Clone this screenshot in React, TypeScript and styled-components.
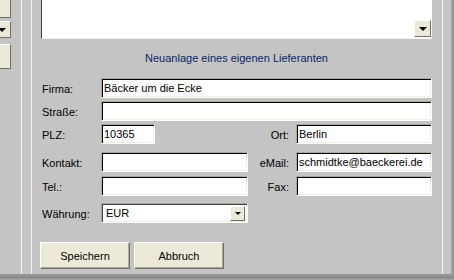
import React from 'react';
import styled, { createGlobalStyle } from 'styled-components';

const GlobalStyle = createGlobalStyle`
  html, body {
    margin: 0;
    padding: 0;
    background: #c4c4c4;
  }
  * {
    box-sizing: border-box;
  }
`;

const ui = {
  face: '#ece9d8',
  gray: '#c4c4c4',
  rule: '#f6f5ea',
  dark: '#716f64',
  mid: '#aca899',
  navy: '#0a246a',
  font: '"Liberation Sans", Arial, sans-serif',
};

const Frame = styled.div`
  width: 454px;
  height: 280px;
  display: flex;
  flex-direction: column;
  background: ${ui.gray};
  overflow: hidden;
  font-family: ${ui.font};
  font-size: 11px;
  color: #000;
`;

const Body = styled.div`
  display: flex;
  height: 274px;
`;

const Side = styled.div`
  width: 22px;
  border-right: 1px solid ${ui.rule};
  display: flex;
  flex-direction: column;
`;

const SideButton = styled.div<{ $h: number; $top: number }>`
  width: 11px;
  height: ${(p) => p.$h}px;
  margin-top: ${(p) => p.$top}px;
  background: ${ui.face};
  border-right: 1px solid ${ui.dark};
  border-bottom: 1px solid ${ui.dark};
  border-top: ${(p) => (p.$top > 0 ? `1px solid #fff` : 'none')};
  display: flex;
  align-items: center;
  justify-content: flex-end;
  padding-right: 4px;
`;

const DownArrow = styled.span<{ $size?: number }>`
  width: 0;
  height: 0;
  border-left: ${(p) => p.$size ?? 4}px solid transparent;
  border-right: ${(p) => p.$size ?? 4}px solid transparent;
  border-top: ${(p) => p.$size ?? 4}px solid #000;
`;

const Gutter = styled.div`
  width: 10px;
  border-right: 1px solid ${ui.rule};
`;

const Panel = styled.div`
  width: 411px;
  border-right: 1px solid ${ui.rule};
  padding: 0 10px 0 9px;
  display: flex;
  flex-direction: column;
`;

const Memo = styled.div`
  height: 39px;
  background: #fff;
  border-left: 1px solid #404040;
  border-bottom: 1px solid ${ui.rule};
  display: flex;
  justify-content: flex-end;
  align-items: flex-end;
  padding: 0 1px 1px 0;
`;

const ScrollButton = styled.div`
  width: 17px;
  height: 17px;
  background: ${ui.face};
  border-top: 1px solid #fff;
  border-left: 1px solid #fff;
  border-right: 1px solid ${ui.dark};
  border-bottom: 1px solid ${ui.dark};
  display: flex;
  align-items: center;
  justify-content: center;
`;

const Title = styled.div`
  margin-top: 13px;
  line-height: 13px;
  text-align: center;
  color: ${ui.navy};
`;

const Row = styled.div<{ $top: number }>`
  display: grid;
  grid-template-columns: 60px 147px 48px 136px;
  align-items: center;
  height: 20px;
  margin-top: ${(p) => p.$top}px;
`;

const Label = styled.span<{ $right?: boolean }>`
  padding-left: 1px;
  padding-top: 2px;
  ${(p) => p.$right && 'text-align: right; padding-right: 7px;'}
`;

const Field = styled.input<{ $span?: number; $w?: number }>`
  height: 20px;
  width: ${(p) => (p.$w ? `${p.$w}px` : '100%')};
  grid-column: span ${(p) => p.$span ?? 1};
  margin: 0;
  padding: 0 0 0 2px;
  background: #fff;
  font-family: ${ui.font};
  font-size: 11px;
  color: #000;
  border-top: 1px solid ${ui.mid};
  border-left: 1px solid ${ui.mid};
  border-right: 1px solid #fff;
  border-bottom: 1px solid #fff;
  box-shadow: inset 1px 1px 0 #000, inset -1px -1px 0 #f1efe2;
  outline: none;
`;

const Select = styled.div`
  height: 20px;
  background: #fff;
  border-top: 1px solid ${ui.mid};
  border-left: 1px solid ${ui.mid};
  border-right: 1px solid #fff;
  border-bottom: 1px solid #fff;
  box-shadow: inset 1px 1px 0 #404040, inset -1px -1px 0 #f1efe2;
  display: flex;
  align-items: center;
  justify-content: space-between;
  padding: 1px 2px 1px 4px;
`;

const SelectButton = styled.div`
  width: 15px;
  height: 15px;
  background: ${ui.face};
  border-top: 1px solid #fff;
  border-left: 1px solid #fff;
  border-right: 1px solid ${ui.dark};
  border-bottom: 1px solid ${ui.dark};
  display: flex;
  align-items: center;
  justify-content: center;
`;

const Actions = styled.div`
  display: flex;
  gap: 4px;
  margin-top: 19px;
  margin-left: -1px;
`;

const Button = styled.button<{ $w: number }>`
  width: ${(p) => p.$w}px;
  height: 27px;
  margin: 0;
  padding: 0;
  background: ${ui.face};
  font-family: ${ui.font};
  font-size: 11px;
  color: #000;
  border-top: 1px solid #fff;
  border-left: 1px solid #fff;
  border-right: 1px solid ${ui.dark};
  border-bottom: 1px solid ${ui.dark};
  box-shadow: inset -1px -1px 0 ${ui.mid};
  cursor: pointer;
`;

const Spacer = styled.div`
  width: 8px;
`;

const ShadowRight = styled.div`
  width: 3px;
  background: linear-gradient(to right, #a9a9a9, #8e8e8e);
`;

const ShadowBottom = styled.div`
  height: 6px;
  background: linear-gradient(to bottom, #9a9a9a, #8a8a8a 60%, #a8a8a8);
`;

export default function App() {
  return (
    <>
      <GlobalStyle />
      <Frame>
        <Body>
          <Side>
            <SideButton $h={18} $top={0} />
            <SideButton $h={17} $top={3}>
              <DownArrow />
            </SideButton>
            <SideButton $h={25} $top={6} />
          </Side>
          <Gutter />
          <Panel>
            <Memo>
              <ScrollButton>
                <DownArrow $size={4} />
              </ScrollButton>
            </Memo>
            <Title>Neuanlage eines eigenen Lieferanten</Title>

            <Row $top={13}>
              <Label>Firma:</Label>
              <Field $span={3} defaultValue="Bäcker um die Ecke" />
            </Row>
            <Row $top={3}>
              <Label>Straße:</Label>
              <Field $span={3} defaultValue="" />
            </Row>
            <Row $top={3}>
              <Label>PLZ:</Label>
              <Field $w={54} defaultValue="10365" />
              <Label $right>Ort:</Label>
              <Field defaultValue="Berlin" />
            </Row>
            <Row $top={8}>
              <Label>Kontakt:</Label>
              <Field defaultValue="" />
              <Label $right>eMail:</Label>
              <Field defaultValue="schmidtke@baeckerei.de" />
            </Row>
            <Row $top={4}>
              <Label>Tel.:</Label>
              <Field defaultValue="" />
              <Label $right>Fax:</Label>
              <Field defaultValue="" />
            </Row>
            <Row $top={7}>
              <Label>Währung:</Label>
              <Select>
                <span>EUR</span>
                <SelectButton>
                  <DownArrow $size={3} />
                </SelectButton>
              </Select>
            </Row>

            <Actions>
              <Button $w={90}>Speichern</Button>
              <Button $w={90}>Abbruch</Button>
            </Actions>
          </Panel>
          <Spacer />
          <ShadowRight />
        </Body>
        <ShadowBottom />
      </Frame>
    </>
  );
}
